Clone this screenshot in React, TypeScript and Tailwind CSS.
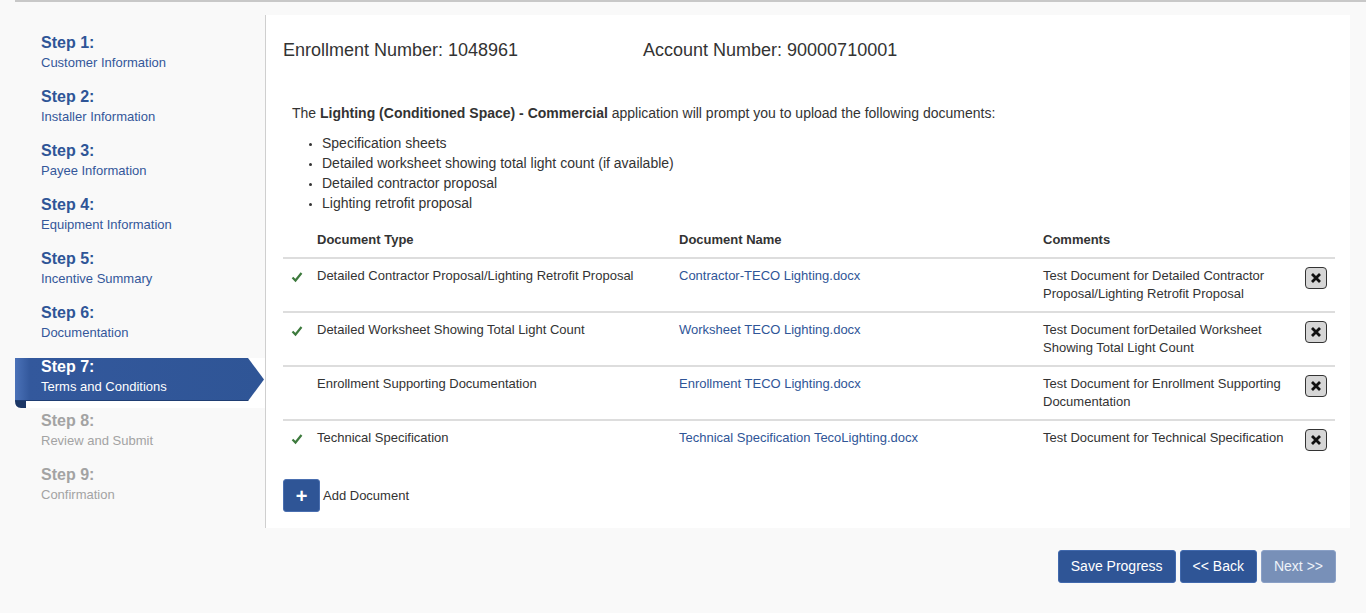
import { memo } from "react";

/* ================= DATA ================= */

const STEPS = [
  { n: 1, label: "Customer Information", state: "done" },
  { n: 2, label: "Installer Information", state: "done" },
  { n: 3, label: "Payee Information", state: "done" },
  { n: 4, label: "Equipment Information", state: "done" },
  { n: 5, label: "Incentive Summary", state: "done" },
  { n: 6, label: "Documentation", state: "done" },
  { n: 7, label: "Terms and Conditions", state: "active" },
  { n: 8, label: "Review and Submit", state: "todo" },
  { n: 9, label: "Confirmation", state: "todo" },
];

const REQUIRED = [
  "Specification sheets",
  "Detailed worksheet showing total light count (if available)",
  "Detailed contractor proposal",
  "Lighting retrofit proposal",
];

const DOCS = [
  {
    ok: true,
    type: "Detailed Contractor Proposal/Lighting Retrofit Proposal",
    name: "Contractor-TECO Lighting.docx",
    comment: "Test Document for Detailed Contractor Proposal/Lighting Retrofit Proposal",
  },
  {
    ok: true,
    type: "Detailed Worksheet Showing Total Light Count",
    name: "Worksheet TECO Lighting.docx",
    comment: "Test Document forDetailed Worksheet Showing Total Light Count",
  },
  {
    ok: false,
    type: "Enrollment Supporting Documentation",
    name: "Enrollment TECO Lighting.docx",
    comment: "Test Document for Enrollment Supporting Documentation",
  },
  {
    ok: true,
    type: "Technical Specification",
    name: "Technical Specification TecoLighting.docx",
    comment: "Test Document for Technical Specification",
  },
];

/* ================= SIDEBAR ================= */

function Ribbon() {
  return (
    <svg
      className="absolute left-0 top-0"
      width="250"
      height="50"
      viewBox="0 0 250 50"
      aria-hidden
    >
      <defs>
        <linearGradient id="rb" x1="0" x2="1" y1="0" y2="0">
          <stop offset="0" stopColor="#4b72b8" />
          <stop offset="0.06" stopColor="#33589c" />
          <stop offset="1" stopColor="#2f5596" />
        </linearGradient>
      </defs>
      <path d="M0 43 Q0 50 6 50 L11 50 L11 43 Z" fill="#1c3766" />
      <path d="M0 0 H233 L249 21.5 L233 43 H0 Z" fill="url(#rb)" />
      <path d="M0 42 H233 L233.5 43 H0 Z" fill="#1f3d72" />
    </svg>
  );
}

const StepItem = memo(function StepItem({
  n,
  label,
  state,
}: {
  n: number;
  label: string;
  state: string;
}) {
  const active = state === "active";
  const todo = state === "todo";
  return (
    <li
      className={`relative h-[50px] mb-[4px] pl-[26px] ${active ? "bg-white" : ""}`}
    >
      {active && <Ribbon />}
      <div className="relative">
        <p
          className={`text-[16px] leading-[18px] font-bold ${
            active ? "text-white" : todo ? "text-[#a3a3a3]" : "text-[#2f5597]"
          }`}
        >
          Step {n}:
        </p>
        <p
          className={`mt-[2px] text-[13px] leading-[18px] ${
            active ? "text-white" : todo ? "text-[#a3a3a3]" : "text-[#34579a]"
          }`}
        >
          {label}
        </p>
      </div>
    </li>
  );
});

/* ================= TABLE ================= */

function Check() {
  return (
    <svg width="12" height="12" viewBox="0 0 12 12" aria-hidden>
      <path
        d="M1.5 6.5 L4.5 9.5 L10.5 2"
        fill="none"
        stroke="#3d7a3d"
        strokeWidth="2.2"
      />
    </svg>
  );
}

function RemoveButton() {
  return (
    <button className="flex items-center justify-center w-[22px] h-[22px] rounded-[4px] border border-[#333] bg-[#d6d6d6]">
      <svg width="12" height="12" viewBox="0 0 12 12" aria-hidden>
        <path d="M2 2 L10 10 M10 2 L2 10" stroke="#111" strokeWidth="2.8" />
      </svg>
    </button>
  );
}

/* ================= PAGE ================= */

export default function App() {
  return (
    <div className="min-h-screen bg-[#f9f9f9] text-[#333] font-['Liberation_Sans',Arial,sans-serif]">
      <div className="ml-[15px] border-t-2 border-[#c8c8c8]" />

      <div className="flex pl-[15px] pr-[16px] pt-[13px]">
        {/* Steps */}
        <aside className="w-[250px] shrink-0 pt-[19px]">
          <ul>
            {STEPS.map((s) => (
              <StepItem key={s.n} {...s} />
            ))}
          </ul>
        </aside>

        {/* Panel */}
        <main className="flex-1 bg-white border-l border-[#cfcfcf] pl-[17px] pr-[15px] pt-[25px] pb-[16px]">
          <div className="flex text-[18px] leading-[20px] text-[#333]">
            <span className="w-[360px]">Enrollment Number: 1048961</span>
            <span>Account Number: 90000710001</span>
          </div>

          <p className="mt-[43px] ml-[9px] text-[14px] leading-[20px]">
            The <b>Lighting (Conditioned Space) - Commercial</b> application
            will prompt you to upload the following documents:
          </p>
          <ul className="mt-[10px] ml-[39px] list-disc text-[14px] leading-[20px] marker:text-[10px]">
            {REQUIRED.map((r) => (
              <li key={r}>{r}</li>
            ))}
          </ul>

          <table className="mt-[10px] w-full border-collapse text-[13px] leading-[18px]">
            <thead>
              <tr className="text-left">
                <th className="w-[34px]" />
                <th className="w-[362px] py-[8px] font-bold">Document Type</th>
                <th className="w-[364px] py-[8px] font-bold">Document Name</th>
                <th className="py-[8px] font-bold">Comments</th>
                <th className="w-[39px]" />
              </tr>
            </thead>
            <tbody>
              {DOCS.map((d) => (
                <tr key={d.name} className="border-t-2 border-[#dddddd] align-top">
                  <td className="pl-[8px] pt-[12px]">{d.ok && <Check />}</td>
                  <td className="pt-[8px] pb-[8px]">{d.type}</td>
                  <td className="pt-[8px] pb-[8px] text-[#2f5597]">{d.name}</td>
                  <td className="pt-[8px] pb-[8px] pr-[8px]">{d.comment}</td>
                  <td className="pl-[9px] pt-[8px]">
                    <RemoveButton />
                  </td>
                </tr>
              ))}
            </tbody>
          </table>

          <div className="mt-[24px] flex items-center gap-[3px]">
            <button className="flex items-center justify-center w-[37px] h-[33px] rounded-[3px] bg-[#2f5596] border border-[#4a6fb0] text-white text-[20px] font-bold leading-none">
              +
            </button>
            <span className="text-[13px]">Add Document</span>
          </div>
        </main>
      </div>

      {/* Actions */}
      <div className="flex justify-end gap-[4px] pr-[30px] pt-[22px]">
        <button className="h-[33px] px-[12px] rounded-[3px] bg-[#2f5596] border border-[#4169ad] text-white text-[14px]">
          Save Progress
        </button>
        <button className="h-[33px] px-[12px] rounded-[3px] bg-[#2f5596] border border-[#4169ad] text-white text-[14px]">
          &lt;&lt; Back
        </button>
        <button className="h-[33px] px-[12px] rounded-[3px] bg-[#7890b8] border border-[#8aa0c6] text-[#eef2f8] text-[14px]">
          Next &gt;&gt;
        </button>
      </div>
    </div>
  );
}
